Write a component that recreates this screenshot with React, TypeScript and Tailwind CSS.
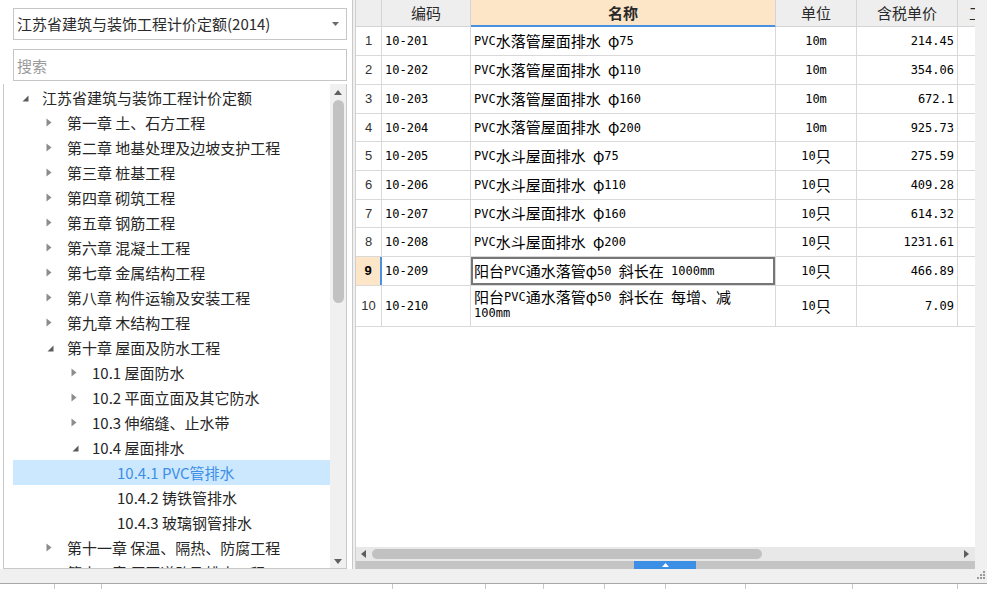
import React from "react";

type TreeNode = {
  label: string;
  level: number;
  state: "open" | "closed" | "leaf";
  selected?: boolean;
};

const treeNodes: TreeNode[] = [
  { label: "江苏省建筑与装饰工程计价定额", level: 0, state: "open" },
  { label: "第一章 土、石方工程", level: 1, state: "closed" },
  { label: "第二章 地基处理及边坡支护工程", level: 1, state: "closed" },
  { label: "第三章 桩基工程", level: 1, state: "closed" },
  { label: "第四章 砌筑工程", level: 1, state: "closed" },
  { label: "第五章 钢筋工程", level: 1, state: "closed" },
  { label: "第六章 混凝土工程", level: 1, state: "closed" },
  { label: "第七章 金属结构工程", level: 1, state: "closed" },
  { label: "第八章 构件运输及安装工程", level: 1, state: "closed" },
  { label: "第九章 木结构工程", level: 1, state: "closed" },
  { label: "第十章 屋面及防水工程", level: 1, state: "open" },
  { label: "10.1 屋面防水", level: 2, state: "closed" },
  { label: "10.2 平面立面及其它防水", level: 2, state: "closed" },
  { label: "10.3 伸缩缝、止水带", level: 2, state: "closed" },
  { label: "10.4 屋面排水", level: 2, state: "open" },
  { label: "10.4.1 PVC管排水", level: 3, state: "leaf", selected: true },
  { label: "10.4.2 铸铁管排水", level: 3, state: "leaf" },
  { label: "10.4.3 玻璃钢管排水", level: 3, state: "leaf" },
  { label: "第十一章 保温、隔热、防腐工程", level: 1, state: "closed" },
  { label: "第十二章 厂区道路及排水工程", level: 1, state: "closed" },
];

const indent = ["pl-[3px]", "pl-[28px]", "pl-[53px]", "pl-[78px]"];

type Row = {
  n: number;
  code: string;
  name: string;
  name2?: string;
  unit: string;
  price: string;
  h: string;
  active?: boolean;
};

const rows: Row[] = [
  { n: 1, code: "10-201", name: "PVC水落管屋面排水 φ75", unit: "10m", price: "214.45", h: "h-[29px]" },
  { n: 2, code: "10-202", name: "PVC水落管屋面排水 φ110", unit: "10m", price: "354.06", h: "h-[29px]" },
  { n: 3, code: "10-203", name: "PVC水落管屋面排水 φ160", unit: "10m", price: "672.1", h: "h-[29px]" },
  { n: 4, code: "10-204", name: "PVC水落管屋面排水 φ200", unit: "10m", price: "925.73", h: "h-[28px]" },
  { n: 5, code: "10-205", name: "PVC水斗屋面排水 φ75", unit: "10只", price: "275.59", h: "h-[29px]" },
  { n: 6, code: "10-206", name: "PVC水斗屋面排水 φ110", unit: "10只", price: "409.28", h: "h-[29px]" },
  { n: 7, code: "10-207", name: "PVC水斗屋面排水 φ160", unit: "10只", price: "614.32", h: "h-[28px]" },
  { n: 8, code: "10-208", name: "PVC水斗屋面排水 φ200", unit: "10只", price: "1231.61", h: "h-[29px]" },
  { n: 9, code: "10-209", name: "阳台PVC通水落管φ50 斜长在 1000mm", unit: "10只", price: "466.89", h: "h-[29px]", active: true },
  { n: 10, code: "10-210", name: "阳台PVC通水落管φ50 斜长在 每增、减", name2: "100mm", unit: "10只", price: "7.09", h: "h-[41px]" },
];

const bottomCols = ["w-[55px]", "w-[47px]", "w-[291px]", "w-[93px]", "w-[58px]", "w-[61px]", "w-[61px]", "w-[80px]", "w-[107px]", "w-[105px]"];

// SimSun-like mixing: CJK runs full width, ASCII runs half width mono
const CJK_RUN = /([\u0370-\u03ff\u3000-\u303f\u4e00-\u9fff\uff00-\uffef]+)/;

function Mixed({ text }: { text: string }) {
  const parts = text.split(CJK_RUN).filter(Boolean);
  return (
    <>
      {parts.map((p, i) =>
        CJK_RUN.test(p) ? (
          <span key={i} className="font-['Noto_Sans_CJK_SC',sans-serif] text-[15px]">
            {p}
          </span>
        ) : (
          <span key={i} className="font-['DejaVu_Sans_Mono',monospace] text-[12px] whitespace-pre">
            {p}
          </span>
        )
      )}
    </>
  );
}

function Toggle({ state }: { state: TreeNode["state"] }) {
  if (state === "closed") {
    return (
      <svg width="6" height="9" viewBox="0 0 6 9">
        <path d="M0.5 0.5 L5.5 4.5 L0.5 8.5 Z" fill="#8c8c8c" />
      </svg>
    );
  }
  if (state === "open") {
    return (
      <svg width="7" height="7" viewBox="0 0 7 7" className="ml-[2px] mt-[1px]">
        <path d="M6.5 0.5 L6.5 6.5 L0.5 6.5 Z" fill="#5c5c5c" />
      </svg>
    );
  }
  return null;
}

function LeftPanel() {
  return (
    <div className="w-[353px] bg-white border-r border-[#c9c9c9] flex flex-col">
      <div className="mt-[8px] ml-[13px] w-[334px] h-[32px] border border-[#c6c6c6] flex items-center justify-between pl-[3px] pr-[7px] text-[15px] text-[#2b2b2b]">
        <span>江苏省建筑与装饰工程计价定额(2014)</span>
        <svg width="7" height="4" viewBox="0 0 7 4">
          <path d="M0 0 L7 0 L3.5 4 Z" fill="#6b6b6b" />
        </svg>
      </div>
      <input
        className="mt-[9px] ml-[13px] w-[334px] h-[32px] border border-[#c6c6c6] pl-[3px] text-[15px] outline-none placeholder:text-[#9a9a9a]"
        placeholder="搜索"
      />
      <div className="mt-[3px] ml-[3px] w-[344px] flex-1 border-l border-r border-b border-[#c9c9c9] flex overflow-hidden">
        <div className="flex-1 pt-[1px] pl-[9px] overflow-hidden">
          {treeNodes.map((node) => (
            <div
              key={node.label}
              className={`h-[25px] flex items-center whitespace-nowrap ${indent[node.level]} ${
                node.selected ? "bg-[#cce8ff] text-[#3d8ee6]" : "text-[#262626]"
              }`}
            >
              <div className="w-[16px] flex items-center justify-center">
                <Toggle state={node.state} />
              </div>
              <span className="ml-[10px] text-[15px] leading-[25px]">{node.label}</span>
            </div>
          ))}
        </div>
        <div className="w-[16px] bg-[#f0f0f0] flex flex-col items-center">
          <div className="h-[16px] flex items-center justify-center">
            <svg width="8" height="5" viewBox="0 0 8 5">
              <path d="M0 5 L4 0 L8 5 Z" fill="#606060" />
            </svg>
          </div>
          <div className="w-[11px] h-[203px] rounded-full bg-[#c2c2c2]" />
          <div className="flex-1" />
          <div className="h-[14px] flex items-center justify-center">
            <svg width="8" height="5" viewBox="0 0 8 5">
              <path d="M0 0 L8 0 L4 5 Z" fill="#606060" />
            </svg>
          </div>
        </div>
      </div>
    </div>
  );
}

function TablePanel() {
  return (
    <div className="w-[620px] bg-white border-l border-[#cfcfcf] flex flex-col text-black">
      <div className="flex h-[27px] bg-[#eeeeee] text-[15px] text-[#2a2a2a]">
        <div className="w-[26px] border-r border-b border-[#d4d4d4]" />
        <div className="w-[89px] border-r border-b border-[#d4d4d4] flex items-center justify-center">编码</div>
        <div className="w-[305px] border-r border-b border-[#d4d4d4] border-b-[#4a90e2] shadow-[inset_0_-1px_0_#4a90e2] bg-[#fde5c8] flex items-center justify-center font-bold">
          名称
        </div>
        <div className="w-[81px] border-r border-b border-[#d4d4d4] flex items-center justify-center">单位</div>
        <div className="w-[101px] border-r border-b border-[#d4d4d4] flex items-center justify-center">含税单价</div>
        <div className="w-[17px] border-b border-[#d4d4d4] overflow-hidden whitespace-nowrap pl-[11px] flex items-center">工程</div>
      </div>

      {rows.map((r) => (
        <div key={r.n} className={`flex ${r.h} border-b border-[#d9d9d9]`}>
          <div
            className={`w-[26px] border-r flex items-center justify-center font-['Liberation_Sans',sans-serif] text-[13px] ${
              r.active ? "bg-[#fde5c8] border-r-2 border-[#4a90e2] font-bold" : "border-[#d9d9d9] text-[#333]"
            }`}
          >
            {r.n}
          </div>
          <div className="w-[89px] border-r border-[#d9d9d9] flex items-center pl-[3px] whitespace-nowrap">
            <Mixed text={r.code} />
          </div>
          {r.name2 ? (
            <div className="w-[305px] border-r border-[#d9d9d9] flex flex-col pt-[2px] pl-[3px] whitespace-nowrap">
              <div className="h-[18px] leading-[18px] flex items-center">
                <Mixed text={r.name} />
              </div>
              <div className="h-[14px] leading-[14px] flex items-center">
                <Mixed text={r.name2} />
              </div>
            </div>
          ) : (
            <div
              className={`w-[305px] border-r border-[#d9d9d9] flex items-center pl-[3px] whitespace-nowrap ${
                r.active ? "shadow-[inset_0_0_0_2px_#767676]" : ""
              }`}
            >
              <Mixed text={r.name} />
            </div>
          )}
          <div className="w-[81px] border-r border-[#d9d9d9] flex items-center justify-center whitespace-nowrap">
            <Mixed text={r.unit} />
          </div>
          <div className="w-[101px] border-r border-[#d9d9d9] flex items-center justify-end pr-[3px]">
            <Mixed text={r.price} />
          </div>
          <div className="flex-1" />
        </div>
      ))}

      <div className="flex-1" />

      <div className="h-[14px] bg-[#e8e8e8] flex items-center">
        <svg width="5" height="8" viewBox="0 0 5 8" className="ml-[5px]">
          <path d="M5 0 L0 4 L5 8 Z" fill="#5d5d5d" />
        </svg>
        <div className="ml-[6px] w-[390px] h-[10px] rounded-full bg-[#c1c1c1]" />
        <div className="flex-1" />
        <svg width="5" height="8" viewBox="0 0 5 8" className="mr-[6px]">
          <path d="M0 0 L5 4 L0 8 Z" fill="#5d5d5d" />
        </svg>
      </div>
      <div className="h-[8px] bg-[#c4c4c4] flex pl-[278px]">
        <div className="w-[62px] h-full bg-[#3d8fe6] flex items-center justify-center">
          <svg width="7" height="4" viewBox="0 0 7 4">
            <path d="M0 4 L3.5 0 L7 4 Z" fill="#ffffff" />
          </svg>
        </div>
      </div>
    </div>
  );
}

function BottomStrip() {
  return (
    <div className="h-[20px] flex flex-col">
      <div className="h-[15px] bg-[#f0f0f0] border-b border-[#a8a8a8] flex justify-end items-start pr-[1px]">
        <svg width="9" height="10" viewBox="0 0 9 10" className="mt-[1px]">
          <rect x="6" y="1" width="2" height="2" fill="#9a9a9a" />
          <rect x="3" y="4" width="2" height="2" fill="#9a9a9a" />
          <rect x="6" y="4" width="2" height="2" fill="#9a9a9a" />
          <rect x="0" y="7" width="2" height="2" fill="#9a9a9a" />
          <rect x="3" y="7" width="2" height="2" fill="#9a9a9a" />
          <rect x="6" y="7" width="2" height="2" fill="#9a9a9a" />
        </svg>
      </div>
      <div className="flex-1 bg-white flex">
        {bottomCols.map((w, i) => (
          <div key={i} className={`${w} border-r border-[#c8c8c8]`} />
        ))}
      </div>
    </div>
  );
}

export default function App() {
  return (
    <div className="w-[987px] h-[589px] overflow-hidden bg-[#f0f0f0] flex flex-col font-['Noto_Sans_CJK_SC',sans-serif] text-[#262626]">
      <div className="flex h-[569px]">
        <LeftPanel />
        <div className="w-[2px] bg-[#f0f0f0]" />
        <TablePanel />
        <div className="w-[12px] bg-[#f0f0f0]" />
      </div>
      <BottomStrip />
    </div>
  );
}
